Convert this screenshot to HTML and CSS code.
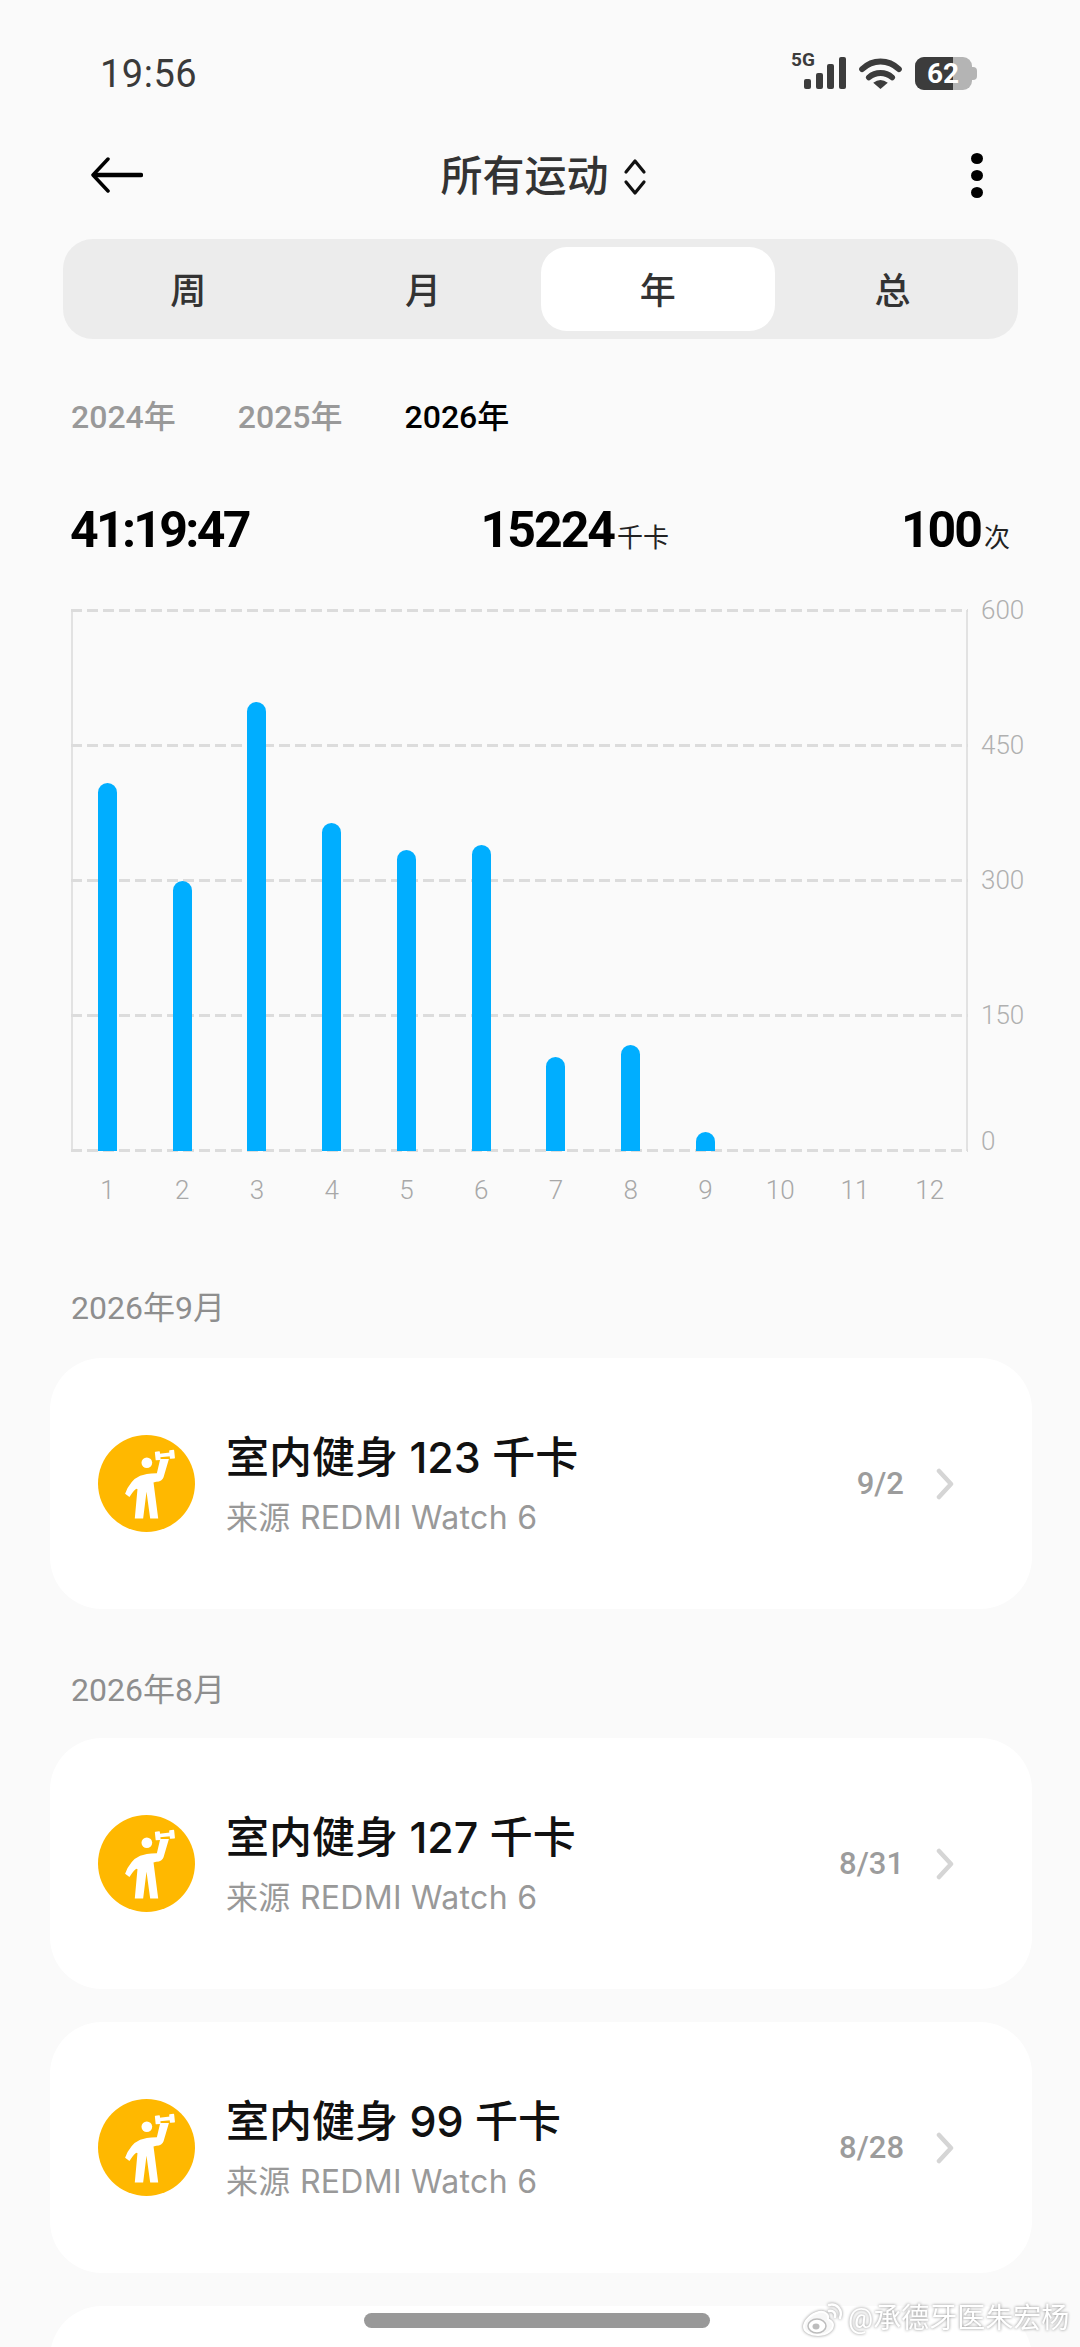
FILE: index.html
```html
<!DOCTYPE html>
<html lang="zh">
<head>
<meta charset="utf-8">
<title>所有运动</title>
<link rel="stylesheet" href="styles.css">
</head>
<body>
<div class="page">
  <header class="status">
    <span class="time">19:56</span>
    <div class="status-icons">
      <svg class="signal" width="56" height="42" viewBox="0 0 56 42">
        <text x="0" y="18" class="fiveg">5G</text>
        <rect x="13" y="31" width="7" height="10" rx="2"/>
        <rect x="25" y="25" width="7" height="16" rx="2"/>
        <rect x="36" y="16" width="7" height="25" rx="2"/>
        <rect x="48" y="9" width="7" height="32" rx="2"/>
      </svg>
      <svg class="wifi" width="43" height="32" viewBox="0 0 44 33">
        <path d="M3 12.500C14 2 30 2 41 12.500" fill="none" stroke="#3c3c3c" stroke-width="6" stroke-linecap="round"/>
        <path d="M10 21C17 15 27 15 34 21" fill="none" stroke="#3c3c3c" stroke-width="6" stroke-linecap="round"/>
        <path d="M14.500 26.500Q22 21 29.500 26.500L22 33Z" fill="#3c3c3c"/>
      </svg>
      <div class="battery"><div class="battery-fill"></div><div class="battery-nub"></div><span class="battery-num">62</span></div>
    </div>
  </header>

  <nav class="nav">
    <svg class="back" width="52" height="36" viewBox="0 0 52 36">
      <path d="M17 2L2 18L17 34" fill="none" stroke="#000" stroke-width="3.500" stroke-linecap="round" stroke-linejoin="round"/>
      <path d="M4 18H50" stroke="#000" stroke-width="4.500" stroke-linecap="round"/>
    </svg>
    <div class="nav-title">
      <span>所有运动</span>
      <svg width="24" height="38" viewBox="0 0 24 38">
        <path d="M3 14L12 3L21 14M3 24L12 35L21 24" fill="none" stroke="#111" stroke-width="3.200" stroke-linecap="round" stroke-linejoin="round"/>
      </svg>
    </div>
    <div class="more"><i></i><i></i><i></i></div>
  </nav>

  <div class="tabs">
    <div class="tab">周</div>
    <div class="tab">月</div>
    <div class="tab tab-on">年</div>
    <div class="tab">总</div>
  </div>

  <div class="years">
    <span>2024年</span><span>2025年</span><span class="year-on">2026年</span>
  </div>

  <div class="stats">
    <div class="stat stat-time">41:19:47</div>
    <div class="stat">15224<small>千卡</small></div>
    <div class="stat">100<small>次</small></div>
  </div>

  <section class="chart">
    <div class="chart-main">
      <div class="plot">
        <div class="lines"><i></i><i></i><i></i><i></i><i></i></div>
        <div class="bars">
          <div class="col"><div class="bar" style="height:368px"></div></div>
          <div class="col"><div class="bar" style="height:270px"></div></div>
          <div class="col"><div class="bar" style="height:449px"></div></div>
          <div class="col"><div class="bar" style="height:328px"></div></div>
          <div class="col"><div class="bar" style="height:301px"></div></div>
          <div class="col"><div class="bar" style="height:306px"></div></div>
          <div class="col"><div class="bar" style="height:94px"></div></div>
          <div class="col"><div class="bar" style="height:106px"></div></div>
          <div class="col"><div class="bar" style="height:19px"></div></div>
          <div class="col"></div>
          <div class="col"></div>
          <div class="col"></div>
        </div>
      </div>
      <div class="xaxis">
        <span>1</span><span>2</span><span>3</span><span>4</span><span>5</span><span>6</span><span>7</span><span>8</span><span>9</span><span>10</span><span>11</span><span>12</span>
      </div>
    </div>
    <div class="yaxis">
      <span>600</span><span>450</span><span>300</span><span>150</span><span class="y-zero">0</span>
    </div>
  </section>

  <h2 class="month month-first">2026年9月</h2>
  <article class="card">
    <svg class="badge" viewBox="84 100 290 290">
      <use href="#lifter"/>
    </svg>
    <div class="card-text">
      <div class="card-title">室内健身 123 千卡</div>
      <div class="card-sub">来源 REDMI Watch 6</div>
    </div>
    <span class="card-date">9/2</span>
    <svg class="chev" width="20" height="32" viewBox="0 0 20 32"><path d="M4 3L16 16L4 29" fill="none" stroke="#d5d5d5" stroke-width="4.500" stroke-linecap="round" stroke-linejoin="round"/></svg>
  </article>

  <h2 class="month">2026年8月</h2>
  <article class="card">
    <svg class="badge" viewBox="84 100 290 290">
      <use href="#lifter"/>
    </svg>
    <div class="card-text">
      <div class="card-title">室内健身 127 千卡</div>
      <div class="card-sub">来源 REDMI Watch 6</div>
    </div>
    <span class="card-date">8/31</span>
    <svg class="chev" width="20" height="32" viewBox="0 0 20 32"><path d="M4 3L16 16L4 29" fill="none" stroke="#d5d5d5" stroke-width="4.500" stroke-linecap="round" stroke-linejoin="round"/></svg>
  </article>
  <article class="card card-next">
    <svg class="badge" viewBox="84 100 290 290">
      <use href="#lifter"/>
    </svg>
    <div class="card-text">
      <div class="card-title">室内健身 99 千卡</div>
      <div class="card-sub">来源 REDMI Watch 6</div>
    </div>
    <span class="card-date">8/28</span>
    <svg class="chev" width="20" height="32" viewBox="0 0 20 32"><path d="M4 3L16 16L4 29" fill="none" stroke="#d5d5d5" stroke-width="4.500" stroke-linecap="round" stroke-linejoin="round"/></svg>
  </article>
  <article class="card card-next"></article>

  <div class="home-bar"></div>
  <div class="watermark">
    <svg width="42" height="34" viewBox="0 0 42 34">
      <path d="M17 10C9 12 2 19 2 25C2 30 9 33 16 33C25 33 31 28 31 23C31 19 27 18 26 17C27 13 24 9 17 10Z" fill="#f7f7f7" stroke="#fff" stroke-width="2"/>
      <ellipse cx="15" cy="24" rx="9" ry="7" fill="#fff" stroke="#bdbdbd" stroke-width="1.500"/>
      <ellipse cx="14" cy="24.500" rx="3.500" ry="3" fill="#bdbdbd"/>
      <path d="M27 9C31 8 34 11 33 15M27 3C35 1 41 8 38 16" fill="none" stroke="#fff" stroke-width="2.500" stroke-linecap="round"/>
    </svg>
    <span>@承德牙医朱宏杨</span>
  </div>

  <svg class="defs" width="0" height="0">
    <defs>
      <g id="lifter">
        <circle cx="229" cy="245" r="145" fill="#ffb800"/>
        <circle cx="230" cy="183" r="16" fill="#fff"/>
        <g transform="rotate(-6 284 160)" fill="#fff">
          <rect x="255" y="147" width="15" height="26" rx="2"/>
          <rect x="298" y="147" width="15" height="26" rx="2"/>
          <rect x="268" y="154" width="32" height="11"/>
        </g>
        <path d="M270 172L296 172L280 226Q276 238 258 240L250 242L264 350L240 350L229 270L219 350L194 350L202 262Q198 255 178 285L165 276Q180 235 210 222Q225 215 260 214Z" fill="#fff"/>
      </g>
    </defs>
  </svg>
</div>
</body>
</html>
```
FILE: styles.css
```css
* { box-sizing: border-box; }
html, body { margin: 0; padding: 0; }
body {
  background: #fafafa;
  font-family: Roboto, "Noto Sans CJK SC", sans-serif;
  color: #333;
}
.page {
  position: relative;
  width: 1080px;
  height: 2347px;
  overflow: hidden;
  background: #fafafa;
}

/* status bar */
.status {
  height: 137px;
  padding: 52px 103px 0 100px;
  display: flex;
  justify-content: space-between;
  align-items: flex-start;
}
.time { font-size: 38px; line-height: 44px; color: #3a3a3a; letter-spacing: .5px; }
.status-icons { display: flex; align-items: flex-start; }
.signal { fill: #3c3c3c; margin: -4px 12px 0 0; }
.fiveg { font: 700 19px Roboto, sans-serif; }
.wifi { margin: 5px 13px 0 0; }
.battery {
  position: relative;
  width: 62px;
  height: 33px;
  margin-top: 5px;
}
.battery::before {
  content: "";
  position: absolute;
  left: 0; top: 0; bottom: 0;
  width: 57px;
  border-radius: 9px;
  background: #b4b4b4;
}
.battery-fill {
  position: absolute;
  left: 0; top: 0; bottom: 0;
  width: 38px;
  border-radius: 9px 0 0 9px;
  background: #3c3c3c;
}
.battery-nub {
  position: absolute;
  right: 0; top: 10px;
  width: 6px; height: 13px;
  border-radius: 0 4px 4px 0;
  background: #b4b4b4;
}
.battery-num {
  position: absolute;
  left: 12px; top: 0;
  font-size: 28px;
  line-height: 33px;
  font-weight: 700;
  color: #fff;
}

/* nav */
.nav {
  height: 80px;
  padding: 0 97px 4px 91px;
  display: flex;
  align-items: center;
  justify-content: space-between;
}
.back { display: block; }
.nav-title {
  display: flex;
  align-items: center;
  gap: 14px;
  font-size: 42px;
  line-height: 60px;
  font-weight: 500;
  color: #333;
  margin: 4px 27px 0 0;
}
.more { display: flex; flex-direction: column; gap: 6px; }
.more i { width: 12px; height: 11px; border-radius: 50%; background: #000; display: block; }

/* tabs */
.tabs {
  margin: 22px 62px 0 63px;
  height: 100px;
  padding: 8px;
  background: #ececec;
  border-radius: 30px;
  display: grid;
  grid-template-columns: repeat(4, 1fr);
}
.tab {
  display: flex;
  align-items: center;
  justify-content: center;
  padding-bottom: 3px;
  font-size: 36px;
  font-weight: 500;
  color: #333;
  border-radius: 26px;
}
.tab-on { background: #fff; }

/* years */
.years {
  margin: 56px 0 0 71px;
  height: 44px;
  display: flex;
  gap: 62px;
  font-size: 32px;
  line-height: 44px;
  font-weight: 500;
  color: #999;
}
.year-on { color: #000; }

/* stats */
.stats {
  margin: 63px 70px 0 71px;
  height: 56px;
  display: flex;
  justify-content: space-between;
  align-items: baseline;
}
.stat {
  font-size: 50px;
  line-height: 56px;
  font-weight: 700;
  color: #000;
  letter-spacing: -2px;
}
.stat-time { letter-spacing: -2.700px; margin-left: -1px; }
.stat small {
  font-size: 26px;
  font-weight: 400;
  letter-spacing: 0;
  margin-left: 3px;
  color: #222;
}

/* chart */
.chart {
  margin: 52px 0 0 71px;
  display: flex;
}
.chart-main { width: 897px; }
.plot {
  position: relative;
  height: 541px;
  border-left: 2px solid #e2e2e2;
  border-right: 2px solid #e2e2e2;
}
.lines {
  position: absolute;
  inset: -1px -2px -1px -2px;
  display: flex;
  flex-direction: column;
  justify-content: space-between;
}
.lines i {
  display: block;
  height: 3px;
  background: repeating-linear-gradient(to right, #dcdcdc 0 11px, transparent 11px 16px);
}
.bars {
  position: relative;
  height: 100%;
  margin: 0 -1px 0 -3px;
  display: grid;
  grid-template-columns: repeat(12, 1fr);
}
.col { display: flex; align-items: flex-end; justify-content: center; }
.bar {
  width: 19px;
  background: #00aeff;
  border-radius: 9.500px 9.500px 0 0;
}
.xaxis {
  margin: 24px 1px 0 -1px;
  display: grid;
  grid-template-columns: repeat(12, 1fr);
  text-align: center;
  font-size: 26px;
  line-height: 30px;
  font-weight: 300;
  color: #a8a8a8;
}
.yaxis {
  margin-left: 13px;
  display: grid;
  grid-template-rows: repeat(4, 135px) auto;
  align-self: flex-start;
  font-size: 26px;
  line-height: 30px;
  font-weight: 300;
  color: #b0b0b0;
}
.yaxis span { display: block; margin-top: -15px; height: 30px; }
.yaxis .y-zero { margin-top: -24px; }

/* list */
.month {
  margin: 61px 0 28px 71px;
  height: 40px;
  font-size: 32px;
  line-height: 40px;
  font-weight: 400;
  color: #8e8e8e;
}
.month-first { margin-top: 83px; margin-bottom: 30px; }
.card {
  margin: 0 48px 0 50px;
  height: 251px;
  padding: 0 77px 0 48px;
  background: #fff;
  border-radius: 52px;
  display: flex;
  align-items: center;
}
.card-next { margin-top: 33px; }
.badge { width: 97px; height: 97px; flex: none; }
.card-text { flex: 1; margin-left: 31px; }
.card-title {
  font-family: Inter, "Noto Sans CJK SC", sans-serif;
  font-size: 43px;
  line-height: 56px;
  font-weight: 500;
  color: #111;
}
.card-sub {
  font-family: Inter, "Noto Sans CJK SC", sans-serif;
  margin-top: 13px;
  font-size: 32px;
  line-height: 40px;
  letter-spacing: .3px;
  color: #999;
}
.card-date {
  font-size: 31px;
  font-weight: 500;
  color: #9c9c9c;
  margin-right: 31px;
}
.chev { flex: none; }

/* overlays */
.home-bar {
  position: absolute;
  left: 364px;
  top: 2313px;
  width: 346px;
  height: 15px;
  border-radius: 8px;
  background: #999;
}
.watermark {
  position: absolute;
  left: 802px;
  top: 2302px;
  display: flex;
  align-items: flex-end;
  gap: 4px;
  filter: drop-shadow(0 0 1.500px #8a8a8a);
}
.watermark span {
  font-size: 28px;
  line-height: 34px;
  color: #fff;
  white-space: nowrap;
}
.defs { position: absolute; }
```
